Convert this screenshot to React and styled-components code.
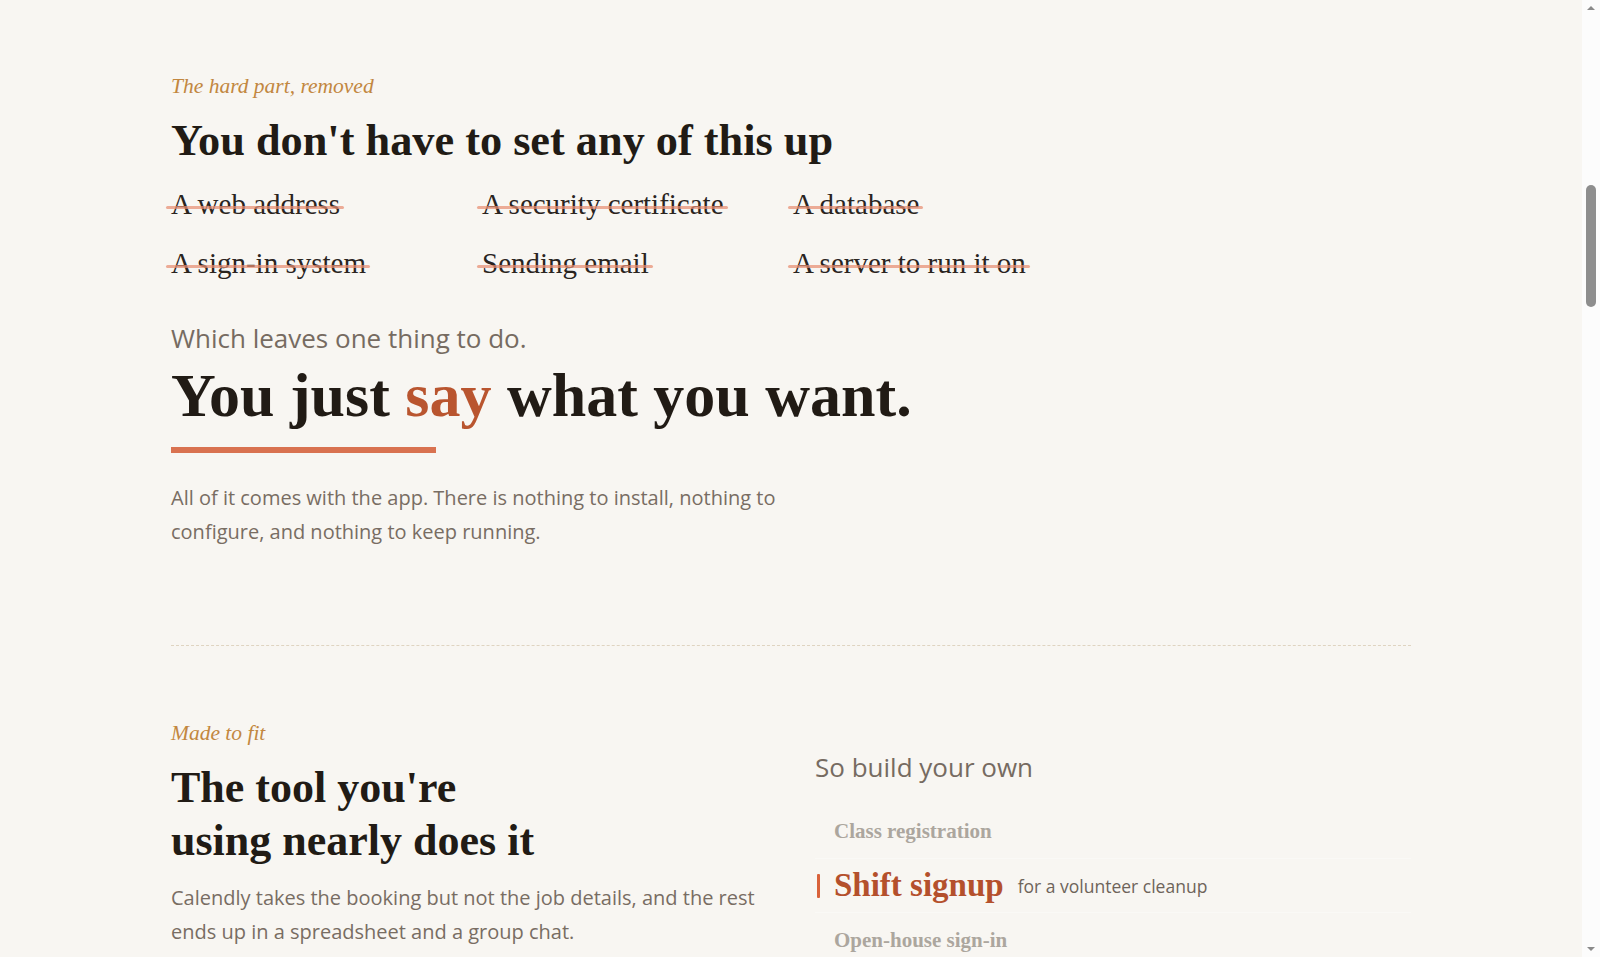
import React from "react";
import styled, { createGlobalStyle } from "styled-components";

const GlobalStyle = createGlobalStyle`
  html, body { margin: 0; padding: 0; height: 100%; }
  body {
    background: #f8f6f2;
    color: #231d17;
    font-family: "Open Sans", "Lato", sans-serif;
    overflow: hidden;
  }
  * { box-sizing: border-box; }
`;

const Shell = styled.div`
  height: 100vh;
  overflow-y: auto;
  padding-right: 18px;
  &::-webkit-scrollbar { display: none; }
`;

const Rail = styled.div`
  position: fixed;
  top: 0;
  right: 0;
  bottom: 0;
  width: 18px;
  background: #fcfcfc;
`;

const Thumb = styled.div`
  position: absolute;
  left: 4px;
  top: 185px;
  width: 10px;
  height: 122px;
  border-radius: 5px;
  background: #8e8e8e;
`;

const Arrow = styled.div`
  position: absolute;
  left: 5px;
  width: 0;
  height: 0;
  border-left: 4px solid transparent;
  border-right: 4px solid transparent;
  ${(p) =>
    p.$down
      ? "bottom: 6px; border-top: 4px solid #8a8a8a;"
      : "top: 6px; border-bottom: 4px solid #8a8a8a;"}
`;

const Page = styled.main`
  max-width: 1240px;
  margin: 0 auto;
  padding: 71px 0 240px;
`;

const Section = styled.section`
  display: flex;
  flex-direction: column;
  align-items: flex-start;
`;

const Eyebrow = styled.div`
  font-family: "Liberation Serif", "Times New Roman", serif;
  font-style: italic;
  font-size: 21.5px;
  line-height: 1.4;
  color: #c2873f;
`;

const Heading = styled.h2`
  margin: ${(p) => p.$mt || 13}px 0 0;
  font-family: "Liberation Serif", "Times New Roman", serif;
  font-weight: 700;
  font-size: ${(p) => p.$size || 44}px;
  line-height: 1.2;
  color: #211b15;
`;

const StrikeGrid = styled.ul`
  list-style: none;
  margin: 17px 0 0;
  padding: 0;
  display: grid;
  grid-template-columns: repeat(3, 279px);
  column-gap: 32px;
  row-gap: 19px;
`;

const Struck = styled.li`
  font-family: "Liberation Serif", "Times New Roman", serif;
  font-size: 29px;
  line-height: 40px;
  color: #2a241e;
`;

const StruckText = styled.span`
  position: relative;
  display: inline-block;
  &::after {
    content: "";
    position: absolute;
    left: -5px;
    right: -4px;
    top: 22px;
    height: 3px;
    border-radius: 2px;
    background: rgba(232, 142, 114, 0.72);
  }
`;

const Lead = styled.p`
  margin: ${(p) => p.$mt || 0}px 0 0;
  font-size: 26px;
  line-height: 1.3;
  color: #766b61;
`;

const BigLine = styled.h1`
  margin: 5px 0 0;
  font-family: "Liberation Serif", "Times New Roman", serif;
  font-weight: 700;
  font-size: 62px;
  line-height: 1.1;
  color: #211b15;
`;

const Accent = styled.span`
  color: #b9552f;
`;

const Underline = styled.div`
  margin-top: 18px;
  width: 265px;
  height: 6px;
  background: #d97250;
`;

const Body = styled.p`
  margin: ${(p) => p.$mt || 28}px 0 0;
  max-width: ${(p) => p.$max || 620}px;
  font-size: 20px;
  line-height: 34px;
  color: #786d63;
`;

const Divider = styled.hr`
  margin: 96px 0 0;
  border: 0;
  border-top: 1px dashed #dfd4c1;
`;

const Split = styled.section`
  margin-top: 72px;
  display: grid;
  grid-template-columns: 1fr 1fr;
  column-gap: 48px;
  align-items: start;
`;

const Column = styled.div`
  display: flex;
  flex-direction: column;
  align-items: flex-start;
`;

const RightColumn = styled.div`
  display: flex;
  flex-direction: column;
  padding-top: 33px;
`;

const Picker = styled.ul`
  list-style: none;
  margin: 19px 0 0;
  padding: 0;
  display: flex;
  flex-direction: column;
`;

const Option = styled.li`
  position: relative;
  display: flex;
  align-items: center;
  gap: 14px;
  height: ${(p) => (p.$active ? 54 : 55)}px;
  padding-left: 19px;
  border-bottom: 1px solid rgba(255, 255, 255, 0.35);
  &::before {
    content: "";
    display: ${(p) => (p.$active ? "block" : "none")};
    position: absolute;
    left: 2px;
    top: 50%;
    width: 3px;
    height: 24px;
    margin-top: -12px;
    border-radius: 1px;
    background: #d9623a;
  }
`;

const OptionName = styled.span`
  font-family: "Liberation Serif", "Times New Roman", serif;
  font-weight: 700;
  font-size: ${(p) => (p.$active ? 33 : 21)}px;
  color: ${(p) => (p.$active ? "#b4502c" : "#aca69e")};
  white-space: nowrap;
`;

const OptionNote = styled.span`
  font-size: 17.5px;
  color: #6e645a;
  white-space: nowrap;
  padding-top: 1px;
`;

const removed = [
  "A web address",
  "A security certificate",
  "A database",
  "A sign-in system",
  "Sending email",
  "A server to run it on",
];

const options = [
  { name: "Class registration" },
  { name: "Shift signup", note: "for a volunteer cleanup", active: true },
  { name: "Open-house sign-in" },
  { name: "Equipment checkout" },
  { name: "Volunteer hours log" },
  { name: "Room booking" },
];

export default function App() {
  return (
    <>
      <GlobalStyle />
      <Shell>
        <Page>
          <Section>
            <Eyebrow>The hard part, removed</Eyebrow>
            <Heading $size={44.3}>You don't have to set any of this up</Heading>
            <StrikeGrid>
              {removed.map((r) => (
                <Struck key={r}>
                  <StruckText>{r}</StruckText>
                </Struck>
              ))}
            </StrikeGrid>
            <Lead $mt={39}>Which leaves one thing to do.</Lead>
            <BigLine>
              You just <Accent>say</Accent> what you want.
            </BigLine>
            <Underline />
            <Body>
              All of it comes with the app. There is nothing to install,
              nothing to configure, and nothing to keep running.
            </Body>
          </Section>
          <Divider />
          <Split>
            <Column>
              <Eyebrow>Made to fit</Eyebrow>
              <Heading $mt={14}>
                The tool you're
                <br />
                using nearly does it
              </Heading>
              <Body $mt={13} $max={596}>
                Calendly takes the booking but not the job details, and the
                rest ends up in a spreadsheet and a group chat.
              </Body>
            </Column>
            <RightColumn>
              <Lead>So build your own</Lead>
              <Picker>
                {options.map((o) => (
                  <Option key={o.name} $active={o.active}>
                    <OptionName $active={o.active}>{o.name}</OptionName>
                    {o.note && <OptionNote>{o.note}</OptionNote>}
                  </Option>
                ))}
              </Picker>
            </RightColumn>
          </Split>
        </Page>
      </Shell>
      <Rail aria-hidden="true">
        <Arrow />
        <Thumb />
        <Arrow $down />
      </Rail>
    </>
  );
}
